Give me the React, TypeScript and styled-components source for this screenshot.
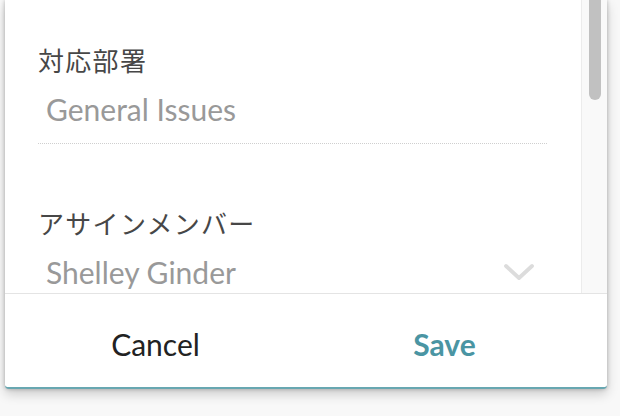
import React from "react";
import styled, { createGlobalStyle } from "styled-components";

const Global = createGlobalStyle`
  html, body { margin: 0; padding: 0; }
  body {
    background: #f8f8f8;
    font-family: Lato, "Noto Sans CJK JP", sans-serif;
    width: 620px;
    height: 416px;
    overflow: hidden;
  }
`;

const Page = styled.div`
  padding: 0 13px 0 5px;
  height: 416px;
  box-sizing: border-box;
`;

const Card = styled.div`
  height: 389px;
  background: #fff;
  display: flex;
  flex-direction: column;
  border-bottom: 2px solid #68a7b1;
  border-radius: 0 0 4px 4px;
  box-sizing: border-box;
  box-shadow: 0 5px 12px rgba(0, 0, 0, 0.18), 0 0 4px rgba(0, 0, 0, 0.24);
  overflow: hidden;
`;

const Body = styled.div`
  flex: 1;
  display: flex;
  min-height: 0;
`;

const Content = styled.div`
  flex: 1;
  overflow: hidden;
  padding: 42px 34px 0 33px;
`;

const Field = styled.div<{ $gap?: number }>`
  margin-bottom: ${(p) => p.$gap ?? 0}px;
`;

const Label = styled.div`
  font-family: "Noto Sans CJK JP", sans-serif;
  font-size: 26px;
  line-height: 36px;
  color: #474747;
  letter-spacing: 1.3px;
`;

const Value = styled.div<{ $dotted?: boolean }>`
  display: flex;
  align-items: center;
  justify-content: space-between;
  font-family: Lato, sans-serif;
  font-size: 30px;
  line-height: 36px;
  color: #999;
  padding: 13px 13px 16px 8px;
  border-bottom: ${(p) => (p.$dotted ? "1px dotted #cfcfcf" : "none")};
`;

const Track = styled.div`
  width: 24px;
  background: #f9f9f9;
  border-left: 1px solid #ececec;
  display: flex;
  justify-content: center;
  padding-left: 1px;
`;

const Thumb = styled.div`
  width: 12px;
  height: 100px;
  background: #c1c1c1;
  border-radius: 0 0 6px 6px;
`;

const Footer = styled.div`
  height: 94px;
  border-top: 1px solid #e4e4e4;
  display: grid;
  grid-template-columns: 1fr 1fr;
  padding: 6px 18px 0 6px;
  box-sizing: border-box;
`;

const Button = styled.button<{ $primary?: boolean }>`
  background: none;
  border: none;
  font-family: Lato, sans-serif;
  font-size: 30px;
  font-weight: ${(p) => (p.$primary ? 700 : 400)};
  color: ${(p) => (p.$primary ? "#4a95a3" : "#222")};
  display: flex;
  align-items: center;
  justify-content: center;
  padding: 0;
  cursor: pointer;
`;

const Chevron = () => (
  <svg width="30" height="18" viewBox="0 0 30 18" fill="none">
    <path d="M2 3 L15 15 L28 3" stroke="#dcdcdc" strokeWidth="3.8" strokeLinecap="round" strokeLinejoin="round" />
  </svg>
);

export default function App() {
  return (
    <>
      <Global />
      <Page>
        <Card>
          <Body>
            <Content>
              <Field $gap={61}>
                <Label>対応部署</Label>
                <Value $dotted>General Issues</Value>
              </Field>
              <Field>
                <Label>アサインメンバー</Label>
                <Value>
                  <span>Shelley Ginder</span>
                  <Chevron />
                </Value>
              </Field>
            </Content>
            <Track>
              <Thumb />
            </Track>
          </Body>
          <Footer>
            <Button>Cancel</Button>
            <Button $primary>Save</Button>
          </Footer>
        </Card>
      </Page>
    </>
  );
}
